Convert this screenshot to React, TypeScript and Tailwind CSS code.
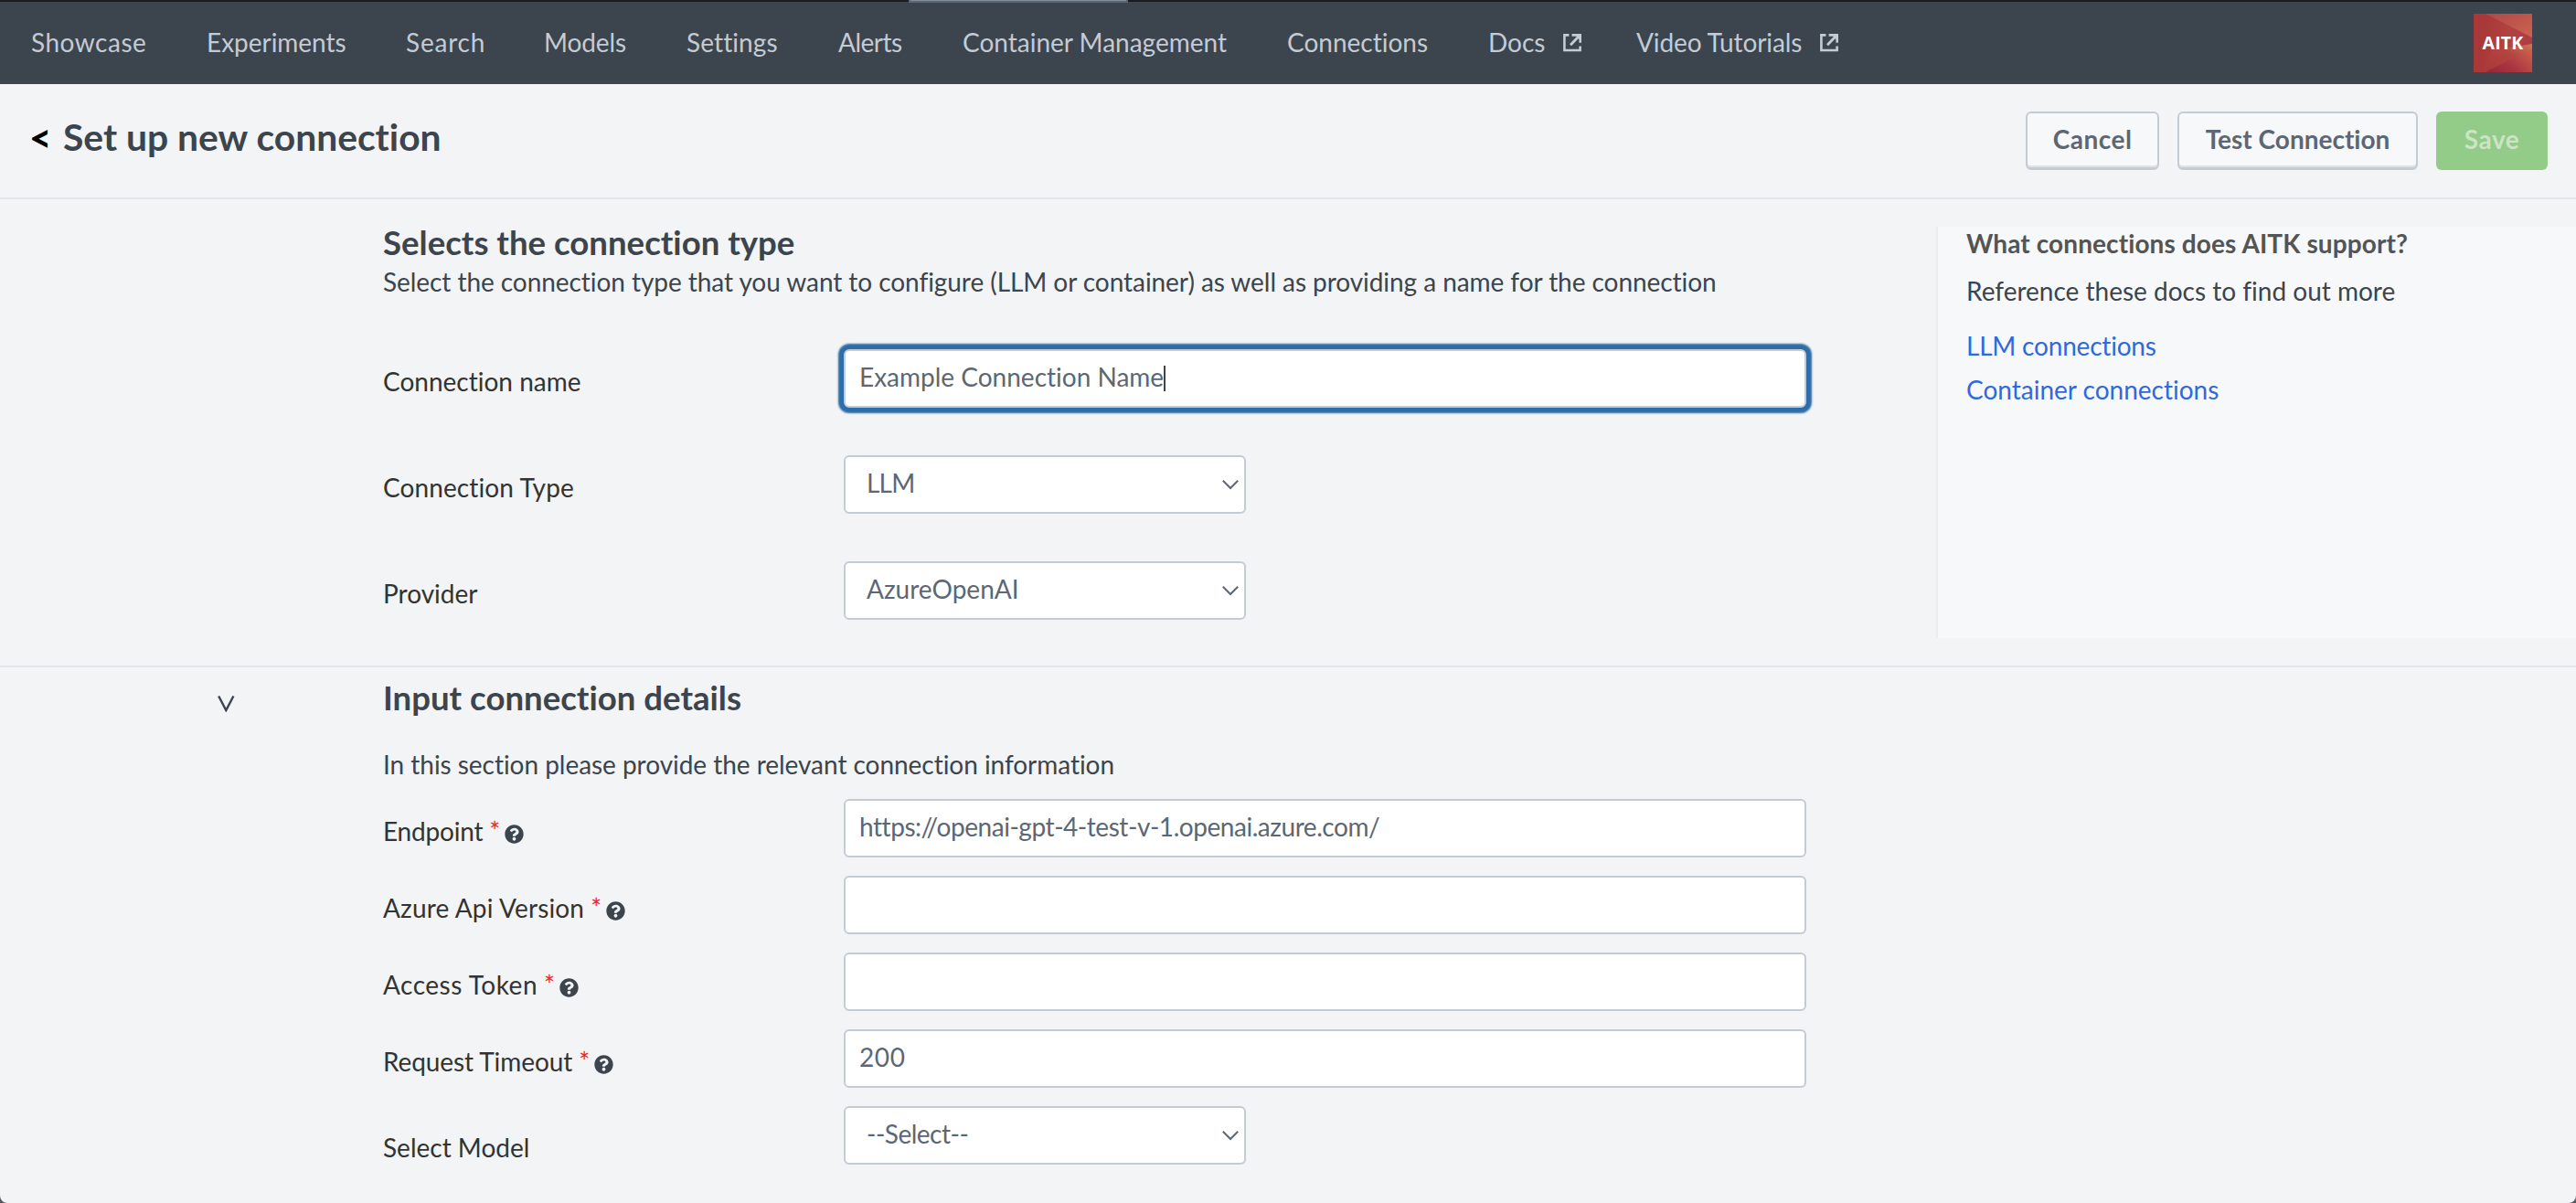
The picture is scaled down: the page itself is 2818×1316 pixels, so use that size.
import React from "react";
import { FaQuestionCircle } from "react-icons/fa";

type NavEntry = { label: string; box: string; external?: boolean };

const NAV: NavEntry[] = [
  { label: "Showcase", box: "w-[192px] tracking-[0.51px]" },
  { label: "Experiments", box: "w-[218px] tracking-[-0.03px]" },
  { label: "Search", box: "w-[151px] tracking-[0.8px]" },
  { label: "Models", box: "w-[156px] tracking-[-0.1px]" },
  { label: "Settings", box: "w-[166px] tracking-[0.1px]" },
  { label: "Alerts", box: "w-[136px] tracking-[-0.5px]" },
  { label: "Container Management", box: "w-[355px]" },
  { label: "Connections", box: "w-[220px]" },
  { label: "Docs", box: "w-[162px]", external: true },
  { label: "Video Tutorials", box: "w-[240px] tracking-[-0.12px]", external: true },
];

function ExternalIcon() {
  return (
    <svg width="20" height="20" viewBox="0 0 20 20" fill="none" stroke="currentColor" strokeWidth="2.6">
      <path d="M6.4 1.4H1.4V18H18.6V13.6" />
      <path d="M8 12.2L17.6 2.2" strokeWidth="2.8" />
      <path d="M9.6 1.4H18.7V9.8" />
      <path d="M13 1H19.4V8Z" fill="currentColor" stroke="none" />
    </svg>
  );
}

function Logo() {
  return (
    <div className="relative h-16 w-16 shrink-0">
      <svg className="absolute inset-0" width="64" height="64" viewBox="0 0 64 64">
        <defs>
          <linearGradient id="top" x1="0" y1="0" x2="1" y2="1">
            <stop offset="0" stopColor="#b04848" />
            <stop offset="1" stopColor="#cd6450" />
          </linearGradient>
          <linearGradient id="right" x1="0" y1="0" x2="1" y2="0.2">
            <stop offset="0" stopColor="#a93838" />
            <stop offset="0.55" stopColor="#b14340" />
            <stop offset="1" stopColor="#b03c44" />
          </linearGradient>
          <linearGradient id="ray" x1="0" y1="1" x2="1" y2="0">
            <stop offset="0" stopColor="#a93638" />
            <stop offset="0.6" stopColor="#b44540" />
            <stop offset="1" stopColor="#cf7a58" />
          </linearGradient>
          <linearGradient id="bottom" x1="0" y1="0.8" x2="1" y2="0.2">
            <stop offset="0" stopColor="#982839" />
            <stop offset="0.4" stopColor="#a83440" />
            <stop offset="1" stopColor="#cc5d4a" />
          </linearGradient>
        </defs>
        <rect width="64" height="64" fill="#a93838" />
        <path d="M13 0L64 26V38L13 64Z" fill="url(#right)" />
        <path d="M13 64L20 40L64 33V40Z" fill="url(#ray)" />
        <path d="M13 0H64V26Z" fill="url(#top)" />
        <path d="M13 64L64 38V64Z" fill="url(#bottom)" />
      </svg>
      <span className="absolute inset-x-0 top-[19px] text-center font-['Open_Sans',sans-serif] text-[19.5px] font-bold leading-[25px] tracking-[0.2px] text-white">
        AITK
      </span>
    </div>
  );
}

function Label({
  text,
  required,
  className = "pt-[15px]",
  spacing = "",
}: {
  text: string;
  required?: boolean;
  className?: string;
  spacing?: string;
}) {
  return (
    <div className={`flex w-[504px] shrink-0 leading-[40px] text-[#333333] ${className}`}>
      <span className={spacing}>{text}</span>
      {required && (
        <>
          <span className="ml-[7px] w-[17px] text-[#f0202c]">*</span>
          <FaQuestionCircle className="mt-[13px] h-[21px] w-[21px] text-[#3c444d]" />
        </>
      )}
    </div>
  );
}

function TextInput({ value = "", focused, spacing = "" }: { value?: string; focused?: boolean; spacing?: string }) {
  return (
    <div
      className={`flex h-16 w-[1053px] rounded-[6px] border-2 border-[#c3cbd4] bg-white pl-[15px] pt-[8px] leading-[40px] text-[#5c6773] ${spacing} ${
        focused ? "shadow-[0_0_2px_6px_#2e6da8]" : ""
      }`}
    >
      <span>{value}</span>
      {focused && <span className="mt-[8px] h-[28px] w-[2px] bg-[#3c444d]" />}
    </div>
  );
}

function SelectBox({ value, spacing = "" }: { value: string; spacing?: string }) {
  return (
    <div className="flex h-16 w-[440px] justify-between rounded-[6px] border-2 border-[#c3cbd4] bg-white pl-[23px] pr-[6px] pt-[8px] leading-[40px] text-[#5c6773]">
      <span className={spacing}>{value}</span>
      <svg className="mt-[17px]" width="18" height="11" viewBox="0 0 18 11" fill="none" stroke="currentColor" strokeWidth="2">
        <path d="M0.8 0.8L9 9L17.2 0.8" />
      </svg>
    </div>
  );
}

function Button({ children, className }: { children: React.ReactNode; className: string }) {
  return (
    <button className={`flex h-16 justify-center rounded-[6px] text-[28px] font-bold leading-[40px] ${className}`}>
      {children}
    </button>
  );
}

export default function App() {
  return (
    <div className="bg-[#55585c]">
      <div className="h-[1316px] w-[2818px] overflow-hidden rounded-b-[8px] bg-[#f2f4f5] font-['Lato','Liberation_Sans',sans-serif] text-[28px] text-[#3c444d] [font-variant-ligatures:none]">
        <nav className="relative flex h-[92px] border-t-2 border-[#1a1c20] bg-[#3c444d] pl-[34px] text-[#c3cbd4]">
          <div className="absolute left-[994px] top-[-2px] h-[3px] w-[240px] border-x-2 border-b-2 border-[#5c6773] bg-[#818d99]" />
          {NAV.map((item) => (
            <a key={item.label} className={`flex shrink-0 whitespace-nowrap pt-[24px] leading-[40px] ${item.box}`}>
              {item.label}
              {item.external && (
                <span className="ml-[20px] mt-[11px]">
                  <ExternalIcon />
                </span>
              )}
            </a>
          ))}
          <div className="ml-auto mr-12 mt-[13px]">
            <Logo />
          </div>
        </nav>

        <header className="flex h-[126px] justify-between border-b-2 border-[#e1e6eb] pl-[32px] pr-[31px]">
          <div className="flex pt-[34px] leading-[48px]">
            <span className="w-[37px] text-[42px] font-black text-black">&lt;</span>
            <h1 className="text-[40.8px] font-bold">Set up new connection</h1>
          </div>
          <div className="flex gap-5 pt-[30px]">
            <Button className="w-[146px] border-2 border-b-[3px] border-[#c3cbd4] bg-[#f7f8fa] pt-[8px] tracking-[0.5px] text-[#5c6773] shadow-[inset_0_-2px_0_#dfe2e4]">
              Cancel
            </Button>
            <Button className="w-[263px] border-2 border-b-[3px] border-[#c3cbd4] bg-[#f7f8fa] pt-[8px] text-[#5c6773] shadow-[inset_0_-2px_0_#dfe2e4]">
              Test Connection
            </Button>
            <Button className="w-[122px] bg-[#93cb88] pt-[10px] tracking-[0.5px] text-[#c9e5c3]">Save</Button>
          </div>
        </header>

        <section className="flex h-[512px] justify-between border-b-2 border-[#e1e6eb] pl-[419px]">
          <div className="pt-[25px]">
            <h2 className="text-[36.6px] font-bold leading-[44px]">Selects the connection type</h2>
            <p className="mt-px whitespace-nowrap leading-[40px] tracking-[-0.06px]">
              Select the connection type that you want to configure (LLM or container) as well as providing a name for the
              connection
            </p>
            <div className="mt-[54px] flex flex-col gap-[52px]">
              <div className="flex">
                <Label text="Connection name" />
                <TextInput value="Example Connection Name" focused />
              </div>
              <div className="flex">
                <Label text="Connection Type" spacing="tracking-[0.1px]" />
                <SelectBox value="LLM" spacing="tracking-[-0.8px]" />
              </div>
              <div className="flex">
                <Label text="Provider" />
                <SelectBox value="AzureOpenAI" />
              </div>
            </div>
          </div>
          <aside className="mt-[30px] flex h-[450px] w-[700px] flex-col border-l-2 border-[#ebedef] bg-[#f7f8fa] pl-[31px] leading-[40px]">
            <h3 className="-mt-[2px] font-bold tracking-[0.1px] text-[#545454]">What connections does AITK support?</h3>
            <p className="mt-[12px]">Reference these docs to find out more</p>
            <a className="mt-[20px] tracking-[-0.2px] text-[#3069dc]">LLM connections</a>
            <a className="mt-[8px] text-[#3069dc]">Container connections</a>
          </aside>
        </section>

        <section className="flex">
          <div className="w-[419px] shrink-0 pl-[238px] pt-[31px]">
            <svg width="19" height="18" viewBox="0 0 19 18" fill="none" stroke="currentColor" strokeWidth="2.4">
              <path d="M1.2 0.5L9.3 16L17.4 0.5" />
            </svg>
          </div>
          <div className="pt-[11px]">
            <h2 className="text-[36.6px] font-bold leading-[44px]">Input connection details</h2>
            <p className="mt-[31px] leading-[40px] tracking-[-0.04px]">
              In this section please provide the relevant connection information
            </p>
            <div className="mt-[18px] flex flex-col gap-5">
              <div className="flex">
                <Label text="Endpoint" required spacing="tracking-[-0.2px]" />
                <TextInput value="https://openai-gpt-4-test-v-1.openai.azure.com/" spacing="tracking-[-0.45px]" />
              </div>
              <div className="flex">
                <Label text="Azure Api Version" required spacing="tracking-[0.16px]" />
                <TextInput />
              </div>
              <div className="flex">
                <Label text="Access Token" required spacing="tracking-[0.5px]" />
                <TextInput />
              </div>
              <div className="flex">
                <Label text="Request Timeout" required spacing="tracking-[-0.09px]" />
                <TextInput value="200" spacing="tracking-[0.6px]" />
              </div>
              <div className="flex">
                <Label text="Select Model" className="pt-[25px]" />
                <SelectBox value="--Select--" spacing="tracking-[-0.5px]" />
              </div>
            </div>
          </div>
        </section>
      </div>
    </div>
  );
}
